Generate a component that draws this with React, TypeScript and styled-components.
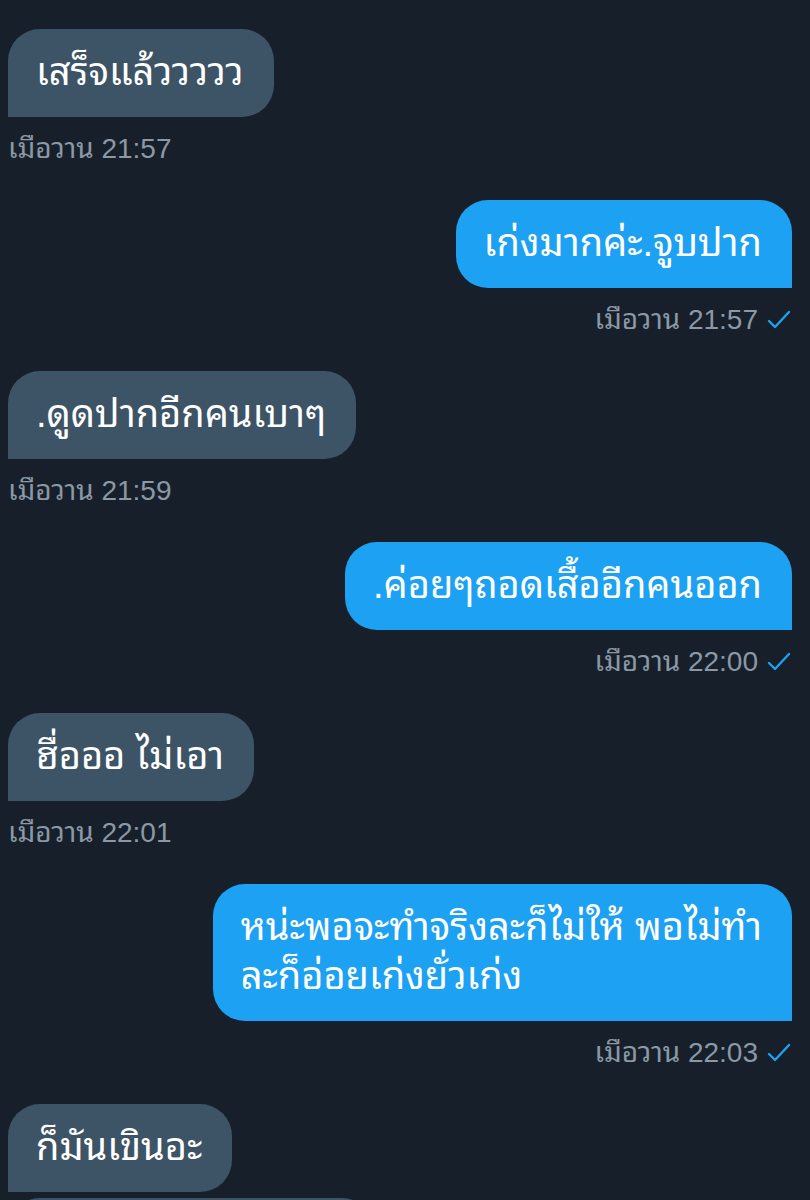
import React from "react";
import styled, { createGlobalStyle } from "styled-components";

const Global = createGlobalStyle`
  html, body {
    margin: 0;
    padding: 0;
    background: #17202a;
  }
  body {
    font-family: "Liberation Sans", "Noto Sans Thai Looped", "Noto Sans Thai", "Noto Sans", sans-serif;
  }
`;

const Thread = styled.div`
  display: flex;
  flex-direction: column;
  padding: 29px 18px 0 8px;
  height: 1200px;
  box-sizing: border-box;
  overflow: hidden;
`;

const Group = styled.div<{ $mine: boolean }>`
  display: flex;
  flex-direction: column;
  align-items: ${(p) => (p.$mine ? "flex-end" : "flex-start")};
  gap: 6px;
  margin-bottom: 35px;
`;

const Bubble = styled.div<{ $mine: boolean }>`
  box-sizing: border-box;
  padding: 19px 30px 20px 28px;
  font-size: 38px;
  line-height: 49px;
  color: #ffffff;
  background: ${(p) => (p.$mine ? "#1da1f2" : "#3d5466")};
  border-radius: ${(p) => (p.$mine ? "32px 32px 0 32px" : "32px 32px 32px 0")};
  white-space: pre;
`;

const Meta = styled.div`
  display: flex;
  align-items: center;
  gap: 8px;
  margin-top: 10px;
  font-size: 28px;
  line-height: 32px;
  color: #8b98a5;
  white-space: pre;
`;

const Check = () => (
  <svg width="26" height="22" viewBox="0 0 26 22" fill="none">
    <polyline
      points="3,12 9,18 23,3"
      stroke="#1da1f2"
      strokeWidth="2.4"
      strokeLinecap="round"
      strokeLinejoin="round"
    />
  </svg>
);

type Msg = { mine: boolean; lines: string[]; time?: string };

const messages: Msg[] = [
  { mine: false, lines: ["เสร็จแล้ววววว"], time: "21:57" },
  { mine: true, lines: ["เก่งมากค่ะ.จูบปาก"], time: "21:57" },
  { mine: false, lines: [".ดูดปากอีกคนเบาๆ"], time: "21:59" },
  { mine: true, lines: [".ค่อยๆถอดเสื้ออีกคนออก"], time: "22:00" },
  { mine: false, lines: ["ฮื่อออ ไม่เอา"], time: "22:01" },
  { mine: true, lines: ["หน่ะพอจะทำจริงละก็ไม่ให้ พอไม่ทำ\nละก็อ่อยเก่งยั่วเก่ง"], time: "22:03" },
  { mine: false, lines: ["ก็มันเขินอะ", "แต่ก็ชอบนะคนดีเลย"] },
];

export default function App() {
  return (
    <>
      <Global />
      <Thread>
        {messages.map((m, i) => (
          <Group key={i} $mine={m.mine}>
            {m.lines.map((l, j) => (
              <Bubble key={j} $mine={m.mine}>
                {l}
              </Bubble>
            ))}
            {m.time && (
              <Meta>
                <span>เมือวาน {m.time}</span>
                {m.mine && <Check />}
              </Meta>
            )}
          </Group>
        ))}
      </Thread>
    </>
  );
}
